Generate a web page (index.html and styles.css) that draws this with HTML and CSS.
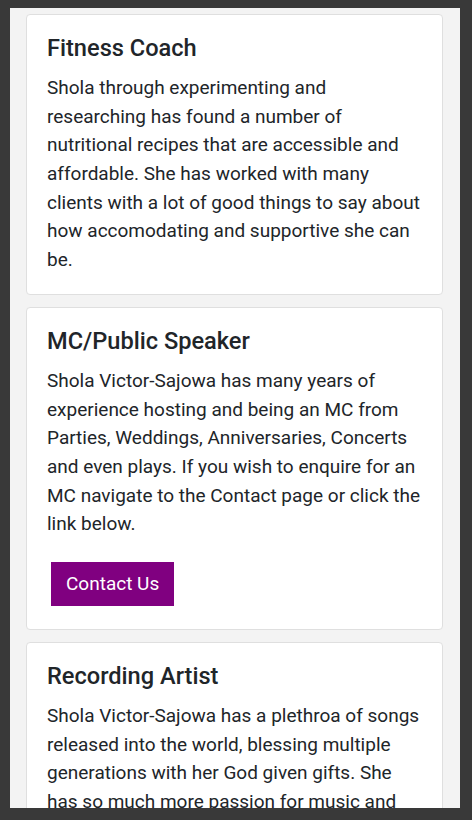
FILE: index.html
```html
<!DOCTYPE html>
<html>
<head>
<meta charset="utf-8">
<link rel="stylesheet" href="styles.css">
</head>
<body>
<div class="frame">
  <div class="list">
    <div class="card">
      <h2 class="card-title">Fitness Coach</h2>
      <p class="card-text">Shola through experimenting and researching has found a number of nutritional recipes that are accessible and affordable. She has worked with many clients with a lot of good things to say about how accomodating and supportive she can be.</p>
    </div>
    <div class="card">
      <h2 class="card-title">MC/Public Speaker</h2>
      <p class="card-text spaced">Shola Victor-Sajowa has many years of experience hosting and being an MC from Parties, Weddings, Anniversaries, Concerts and even plays. If you wish to enquire for an MC navigate to the Contact page or click the link below.</p>
      <a class="btn" href="#">Contact Us</a>
    </div>
    <div class="card">
      <h2 class="card-title">Recording Artist</h2>
      <p class="card-text">Shola Victor-Sajowa has a plethroa of songs released into the world, blessing multiple generations with her God given gifts. She has so much more passion for music and worship that she shares with everyone she meets.</p>
    </div>
  </div>
</div>
</body>
</html>
```
FILE: styles.css
```css
html, body {
  margin: 0;
  padding: 0;
  background: #393939;
}
body {
  padding: 8px 12px 12px 10px;
  height: 820px;
  box-sizing: border-box;
  font-family: Roboto, "Liberation Sans", sans-serif;
  color: #212529;
}
.frame {
  height: 800px;
  overflow: hidden;
  background: #f3f3f3;
}
.list {
  display: flex;
  flex-direction: column;
  gap: 12px;
  padding: 6px 17px 0 16px;
}
.card {
  background: #fff;
  border: 1px solid #dfdfdf;
  border-radius: 4px;
  padding: 20px 20px 19px;
}
.card-title {
  margin: 0 0 12px;
  font-size: 23.6px;
  font-weight: 500;
  line-height: 1.15;
}
.card-text {
  margin: 0;
  font-size: 19px;
  line-height: 28.67px;
}
.card-text.spaced {
  margin-bottom: 19px;
}
.btn {
  display: inline-block;
  margin: 4px;
  padding: 0 15px;
  height: 44px;
  line-height: 44px;
  background: #800080;
  color: #fff;
  font-size: 19px;
  text-decoration: none;
}
```
